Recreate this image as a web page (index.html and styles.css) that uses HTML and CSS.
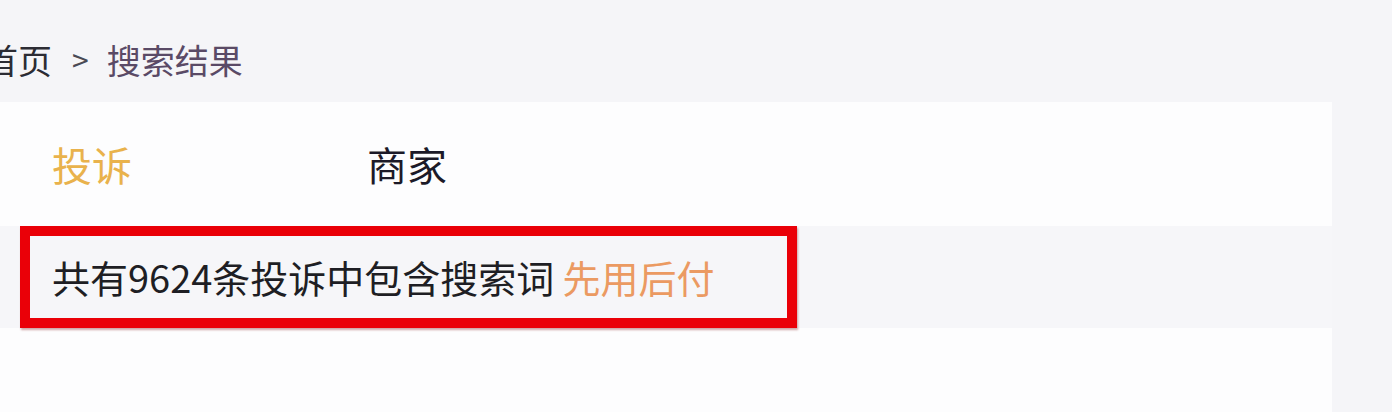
FILE: index.html
```html
<!DOCTYPE html>
<html lang="zh-CN">
<head>
    <meta charset="UTF-8">
    <meta name="viewport" content="width=device-width, initial-scale=1.0">
    <title>搜索结果</title>
    <link rel="stylesheet" href="styles.css">
</head>
<body>

<div class="page">
    <div class="breadcrumb">
        <span class="crumb-home">首页</span>
        <span class="crumb-sep">&gt;</span>
        <span class="crumb-current">搜索结果</span>
    </div>

    <div class="result-card">
        <div class="tabs">
            <div class="tab active">投诉</div>
            <div class="tab">商家</div>
        </div>

        <div class="count-bar">
            <div class="count-box">
                共有9624条投诉中包含搜索词<span class="keyword">先用后付</span>
            </div>
        </div>

        <div class="list"></div>
    </div>
</div>

</body>
</html>
```

FILE: styles.css
```css
/* Base Styling */
* {
    box-sizing: border-box;
    margin: 0;
    padding: 0;
}
body {
    font-family: "Noto Sans CJK SC", "Noto Sans", sans-serif;
    background-color: #f5f5f8;
    overflow: hidden;
}

.page {
    width: 1392px;
    height: 412px;
    padding-right: 60px;
}

/* Breadcrumb */
.breadcrumb {
    height: 102px;
    display: flex;
    align-items: center;
    margin-left: -16px;
    padding-top: 16px;
    font-size: 34px;
}
.crumb-home {
    color: #2c2c34;
}
.crumb-sep {
    color: #4a4a55;
    font-size: 30px;
    margin: 0 18px 0 20px;
}
.crumb-current {
    color: #5a4a66;
}

/* Result Card */
.result-card {
    background-color: #fdfdfe;
    height: 310px;
}

/* Tabs */
.tabs {
    height: 126px;
    display: flex;
    align-items: center;
    padding-left: 52px;
    padding-bottom: 2px;
}
.tab {
    font-size: 40px;
    color: #1c1a28;
    width: 315px;
}
.tab.active {
    color: #e9b24c;
}

/* Count Bar */
.count-bar {
    height: 102px;
    background-color: #f6f6f9;
    padding-left: 20px;
}
.count-box {
    width: 777px;
    height: 102px;
    margin-top: -2px;
    border: 10px solid #ea0008;
    box-shadow: 1px 2px 2px rgba(120, 0, 0, 0.35);
    display: flex;
    align-items: center;
    padding-left: 22px;
    padding-bottom: 2px;
    font-size: 38px;
    color: #1e1e24;
}
.keyword {
    color: #eb9a62;
    margin-left: 8px;
}

.list {
    height: 82px;
}
```
